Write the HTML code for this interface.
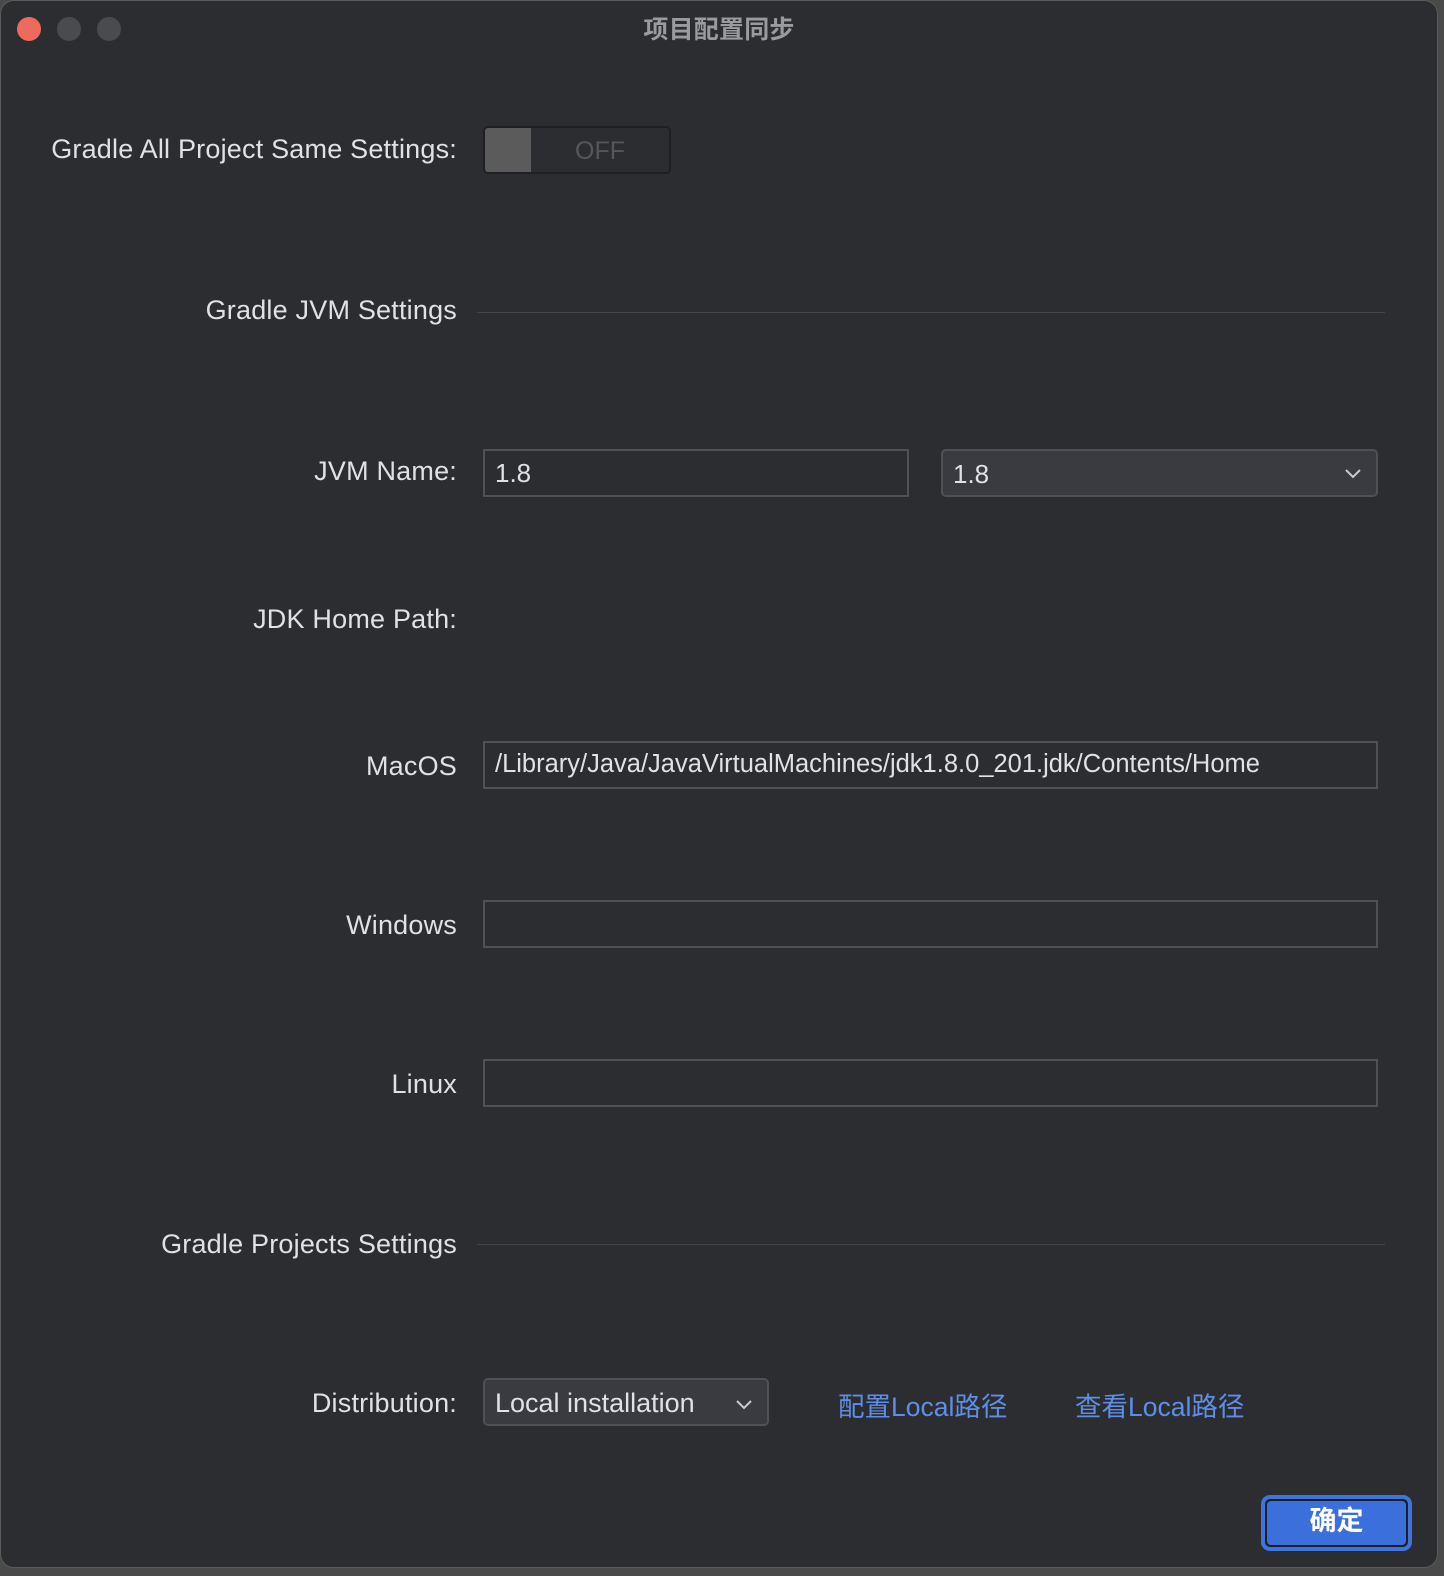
<!DOCTYPE html>
<html><head><meta charset="utf-8"><style>
html,body{margin:0;padding:0;background:#4a4a4a;}
body{width:1444px;height:1576px;position:relative;overflow:hidden;font-family:"Liberation Sans","Noto Sans CJK SC",sans-serif;}
.win{position:absolute;left:0;top:0;width:1436px;height:1566px;background:#2b2d30;border:1px solid #5a5a5a;border-radius:14px;}
.dot{position:absolute;top:16px;width:24px;height:24px;border-radius:50%;background:#4a4b4e;}
.t{position:absolute;color:#dfe1e5;font-size:27px;letter-spacing:0.2px;white-space:nowrap;}
.r{text-align:right;width:440px;left:16px;}
.box{position:absolute;box-sizing:border-box;border:2px solid #4e5157;background:#2b2d30;height:48px;}
.dd{position:absolute;box-sizing:border-box;border:2px solid #4e5157;background:#393b40;border-radius:5px;height:48px;}
.in{position:absolute;left:10px;top:7px;color:#dfe1e5;font-size:26px;white-space:nowrap;}
.line{position:absolute;height:1px;background:#43454a;left:476px;width:908px;}
.link{position:absolute;color:#5f8ee8;font-size:26.5px;white-space:nowrap;}
</style></head><body>
<div class="win">
<div class="dot" style="left:16px;background:#ee6a5f"></div>
<div class="dot" style="left:56px"></div>
<div class="dot" style="left:96px"></div>
<div class="t" style="left:0;width:1436px;text-align:center;top:9px;color:#9a9b9e;font-size:25px;font-weight:bold">项目配置同步</div>

<div class="t r" style="top:133px">Gradle All Project Same Settings:</div>
<div style="position:absolute;left:482px;top:125px;width:188px;height:48px;box-sizing:border-box;border:2px solid #1f2023;border-radius:5px;background:#2b2d30;">
<div style="position:absolute;left:0;top:0;width:46px;height:44px;background:#5b5b5c;border-radius:3px 0 0 3px"></div>
<div style="position:absolute;left:90px;top:9px;color:#55575b;font-size:25px">OFF</div></div>

<div class="t r" style="top:294px">Gradle JVM Settings</div>
<div class="line" style="top:311px"></div>

<div class="t r" style="top:455px">JVM Name:</div>
<div class="box" style="left:482px;top:448px;width:426px"><div class="in">1.8</div></div>
<div class="dd" style="left:940px;top:448px;width:437px"><div class="in" style="top:8px">1.8</div>
<svg style="position:absolute;right:14px;top:16px" width="18" height="12" viewBox="0 0 18 12"><path d="M2 3 L9 10 L16 3" fill="none" stroke="#c9cbcf" stroke-width="2"/></svg></div>

<div class="t r" style="top:603px">JDK Home Path:</div>

<div class="t r" style="top:750px">MacOS</div>
<div class="box" style="left:482px;top:740px;width:895px"><div class="in" style="font-size:25.5px">/Library/Java/JavaVirtualMachines/jdk1.8.0_201.jdk/Contents/Home</div></div>

<div class="t r" style="top:909px">Windows</div>
<div class="box" style="left:482px;top:899px;width:895px"></div>

<div class="t r" style="top:1068px">Linux</div>
<div class="box" style="left:482px;top:1058px;width:895px"></div>

<div class="t r" style="top:1228px">Gradle Projects Settings</div>
<div class="line" style="top:1243px"></div>

<div class="t r" style="top:1387px">Distribution:</div>
<div class="dd" style="left:482px;top:1377px;width:286px"><div class="in" style="font-size:27px;top:8px">Local installation</div>
<svg style="position:absolute;right:14px;top:18px" width="18" height="12" viewBox="0 0 18 12"><path d="M2 3 L9 10 L16 3" fill="none" stroke="#c9cbcf" stroke-width="2"/></svg></div>
<div class="link" style="left:837px;top:1384px">配置Local路径</div>
<div class="link" style="left:1074px;top:1384px">查看Local路径</div>

<div style="position:absolute;left:1260px;top:1494px;width:151px;height:56px;box-sizing:border-box;border:4px solid #3f73de;border-radius:9px;background:#1e1f22;">
<div style="position:absolute;left:2px;top:2px;right:2px;bottom:2px;background:#3b6fdc;border-radius:4px;color:#fff;font-size:27px;text-align:center;line-height:40px;font-weight:bold">确定</div></div>
</div>
</body></html>
